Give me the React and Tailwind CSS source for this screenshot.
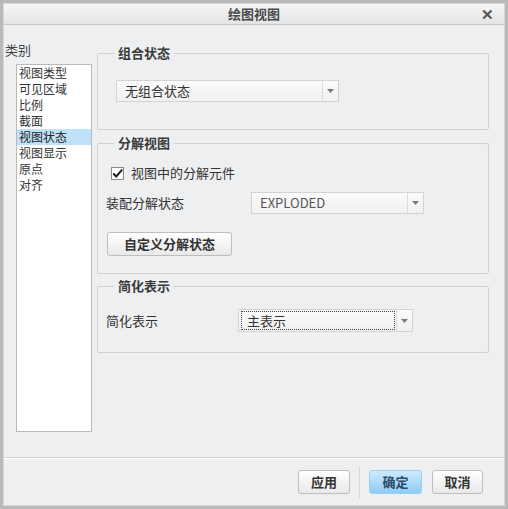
const font = { fontFamily: '"Noto Sans CJK SC", "Liberation Sans", sans-serif' };

const categories = ["视图类型", "可见区域", "比例", "截面", "视图状态", "视图显示", "原点", "对齐"];

function Arrow() {
  return (
    <div className="w-[16px] h-full border-l border-[#dcdcdc] flex items-center justify-center">
      <svg width="7" height="4" viewBox="0 0 7 4">
        <path d="M0 0 L7 0 L3.5 4 Z" fill="#7a7a7a" />
      </svg>
    </div>
  );
}

function Select({ value, className, focused, dim }) {
  return (
    <div className={`flex border border-[#d2d3d5] bg-gradient-to-b from-[#fbfbfb] to-[#f0f0f0] ${className}`}>
      <div className="flex-1 flex items-center pl-[3px] pr-[2px] py-[2px]">
        <span
          className={`flex items-center h-full w-full px-[5px] text-[13px] ${dim ? "text-[#555]" : "text-[#333]"} ${focused ? "outline outline-1 outline-dotted outline-[#444]" : ""}`}
        >
          {value}
        </span>
      </div>
      <Arrow />
    </div>
  );
}

function Group({ title, className, children }) {
  return (
    <fieldset className={`border border-[#d0d1d3] rounded-[2px] ${className}`}>
      <legend className="ml-[16px] px-[4px] text-[13px] leading-[16px] font-bold text-[#3a3a3a]">{title}</legend>
      {children}
    </fieldset>
  );
}

function Btn({ children, primary, className }) {
  return (
    <button
      className={`h-[24px] rounded-[3px] border text-[13px] font-bold ${
        primary
          ? "border-[#9fd0f0] bg-gradient-to-b from-[#cdeafd] to-[#8ccdf5] text-[#2b4a66]"
          : "border-[#bdbdbd] bg-gradient-to-b from-[#ffffff] to-[#e9e9e9] text-[#333]"
      } ${className}`}
    >
      {children}
    </button>
  );
}

export default function App() {
  return (
    <div style={font} className="w-[508px] h-[509px] bg-[#b9b9b9] p-[3px]">
      <div className="w-full h-full flex flex-col bg-[#eeeff1] border border-[#d8d8d8]">
        <div className="relative h-[21px] flex items-center justify-center bg-gradient-to-b from-[#f6f6f6] to-[#e3e4e6] border-b border-[#c6c7c9]">
          <span className="text-[13px] font-bold text-[#4a4a4a]">绘图视图</span>
          <span className="absolute right-[10px] top-[2px] text-[15px] leading-[16px] font-bold text-[#555]">✕</span>
        </div>

        <div className="flex flex-1 border-b border-[#d4d5d7]">
          <div className="w-[89px] pt-[17px] pl-[1px]">
            <div className="text-[13px] leading-[16px] text-[#444]">类别</div>
            <div className="mt-[6px] ml-[11px] w-[76px] h-[368px] bg-white border border-[#b9babc]">
              {categories.map((c) => (
                <div
                  key={c}
                  className={`text-[12px] leading-[16px] pl-[2px] ${c === "视图状态" ? "bg-[#bfe2f8] text-[#222]" : "text-[#333]"}`}
                >
                  {c}
                </div>
              ))}
            </div>
          </div>

          <div className="w-[392px] ml-[4px] pt-[20px]">
            <Group title="组合状态" className="h-[85px]">
              <Select value="无组合状态" className="ml-[18px] mt-[19px] w-[223px] h-[22px]" />
            </Group>

            <Group title="分解视图" className="mt-[5px] h-[139px]">
              <div className="flex items-center ml-[13px] mt-[15px] h-[14px]">
                <div className="w-[13px] h-[13px] border border-[#8b8b8b] bg-white flex items-center justify-center">
                  <svg width="13" height="11" viewBox="0 0 13 11">
                    <path d="M1.5 5.5 L5 9 L12 1" stroke="#222" strokeWidth="2.4" fill="none" />
                  </svg>
                </div>
                <span className="ml-[7px] text-[13px] text-[#333]">视图中的分解元件</span>
              </div>
              <div className="flex items-center mt-[12px] ml-[8px]">
                <span className="w-[145px] text-[13px] text-[#333]">装配分解状态</span>
                <Select value="EXPLODED" dim className="w-[173px] h-[22px]" />
              </div>
              <Btn className="ml-[9px] mt-[18px] w-[125px]">自定义分解状态</Btn>
            </Group>

            <Group title="简化表示" className="mt-[4px] h-[75px]">
              <div className="flex items-center mt-[15px] ml-[8px]">
                <span className="w-[132px] text-[13px] text-[#333]">简化表示</span>
                <Select value="主表示" focused className="w-[175px] h-[23px]" />
              </div>
            </Group>
          </div>
        </div>

        <div className="h-[47px] flex items-center justify-end pr-[21px] border-t border-white">
          <Btn className="w-[52px]">应用</Btn>
          <div className="w-px h-[32px] bg-[#d6d6d6] mx-[9px]" />
          <Btn primary className="w-[53px]">确定</Btn>
          <Btn className="w-[51px] ml-[10px]">取消</Btn>
        </div>
      </div>
    </div>
  );
}
